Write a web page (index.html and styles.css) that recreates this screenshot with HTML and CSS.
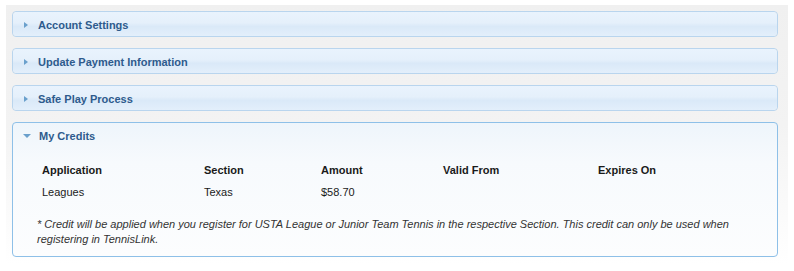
FILE: index.html
```html
<!DOCTYPE html>
<html>
<head>
<meta charset="utf-8">
<link rel="stylesheet" href="styles.css">
</head>
<body>
<div class="wrap">
  <div class="panel closed">
    <div class="head"><span class="tri right"></span>Account Settings</div>
  </div>
  <div class="panel closed">
    <div class="head"><span class="tri right"></span>Update Payment Information</div>
  </div>
  <div class="panel closed">
    <div class="head"><span class="tri right"></span>Safe Play Process</div>
  </div>
  <div class="panel open">
    <div class="head"><span class="tri down"></span>My Credits</div>
    <div class="body">
      <table class="credits">
        <thead>
          <tr><th class="c1">Application</th><th class="c2">Section</th><th class="c3">Amount</th><th class="c4">Valid From</th><th class="c5">Expires On</th></tr>
        </thead>
        <tbody>
          <tr><td>Leagues</td><td>Texas</td><td>$58.70</td><td></td><td></td></tr>
        </tbody>
      </table>
      <p class="note">* Credit will be applied when you register for USTA League or Junior Team Tennis in the respective Section. This credit can only be used when registering in TennisLink.</p>
    </div>
  </div>
</div>
</body>
</html>
```
FILE: styles.css
```css
html, body { margin: 0; padding: 0; background: #fff; }
body { font-family: Arial, "Liberation Sans", sans-serif; font-size: 11px; color: #222; }
.wrap {
  margin: 5px 6px 0 6px;
  padding: 6px 10px 14px 6px;
  background: linear-gradient(#f0f0f0 0, #f3f3f3 120px, #ffffff 260px);
  display: flex; flex-direction: column; gap: 11px;
  width: 766px;
}
.panel { border: 1px solid #b9d5ee; border-radius: 4px; }
.closed .head {
  height: 24px;
  padding-top: 1px;
  box-sizing: border-box;
  background: linear-gradient(#e9f3fd 0%, #e5f0fb 45%, #dae9f8 60%, #e3effb 100%);
}
.head {
  display: flex; align-items: center;
  padding-left: 10px;
  font-weight: bold; color: #2e5b8d;
  border-radius: 4px;
}
.tri { display: inline-block; width: 0; height: 0; }
.tri.right { border-top: 3.5px solid transparent; border-bottom: 3.5px solid transparent; border-left: 4px solid #6aa0cc; margin-left: 1px; margin-right: 10px; }
.tri.down { border-left: 4px solid transparent; border-right: 4px solid transparent; border-top: 4px solid #6aa0cc; margin-right: 8px; }
.open { border-color: #8ec0e8; background: linear-gradient(#eef5fb 0, #f7fafd 40px, #fcfdfe 100%); }
.open .head { height: 25px; }
.body { padding: 12px 24px 9px 24px; }
.credits { border-collapse: collapse; }
.credits th { text-align: left; font-weight: bold; padding: 0 0 0 5px; height: 20px; color: #1a1a1a; }
.credits td { padding: 0 0 0 5px; height: 23px; color: #1a1a1a; }
.c1 { width: 157px; }
.c2 { width: 112px; }
.c3 { width: 117px; }
.c4 { width: 150px; }
.c5 { width: 120px; }
.note { margin: 14px 0 0 0; font-style: italic; line-height: 15px; color: #333; padding-right: 20px; }
```
